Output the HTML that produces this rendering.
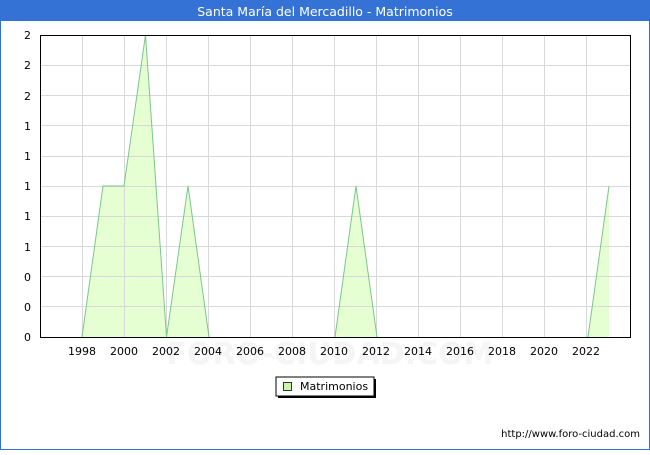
<!DOCTYPE html><html><head><style>body{margin:0}</style></head><body>
<svg width="650" height="450" xmlns="http://www.w3.org/2000/svg" font-family="DejaVu Sans, Liberation Sans, sans-serif">
<rect x="0" y="0" width="650" height="450" fill="#3572d6"/>
<rect x="1" y="21" width="648" height="428" fill="#fff"/>
<text x="325" y="16" fill="#fff" font-size="12.5" text-anchor="middle">Santa María del Mercadillo - Matrimonios</text>
<text x="330" y="364" font-size="30" fill="#f5f5f5" text-anchor="middle" font-weight="bold">FORO-CIUDAD.COM</text>
<path d="M82 337L103 186L124 186L145.5 35L166.5 337L188 186L209 337ZM335 337L356 186L377 337ZM588 337L609 186L609 337Z" fill="#e6ffd2" stroke="none"/>
<g stroke="#d8d8d8" stroke-width="1">
<path d="M82.5 35V337M124.5 35V337M166.5 35V337M208.5 35V337M250.5 35V337M292.5 35V337M334.5 35V337M376.5 35V337M418.5 35V337M460.5 35V337M502.5 35V337M544.5 35V337M586.5 35V337"/>
<path d="M40 65.5H630M40 95.5H630M40 125.5H630M40 156.5H630M40 186.5H630M40 216.5H630M40 246.5H630M40 276.5H630M40 306.5H630"/>
</g>
<path d="M82 337L103 186L124 186L145.5 35L166.5 337L188 186L209 337M335 337L356 186L377 337M588 337L609 186" fill="none" stroke="#7cc68e" stroke-width="1"/>
<rect x="40.5" y="35.5" width="590" height="302" fill="none" stroke="#000"/>
<g font-size="11" fill="#000" text-anchor="end">
<text x="31" y="39">2</text><text x="31" y="69">2</text><text x="31" y="100">2</text><text x="31" y="130">1</text><text x="31" y="160">1</text><text x="31" y="190">1</text><text x="31" y="220">1</text><text x="31" y="251">1</text><text x="31" y="281">0</text><text x="31" y="311">0</text><text x="31" y="341">0</text>
</g>
<g font-size="11" fill="#000" text-anchor="middle">
<text x="82" y="355">1998</text><text x="124" y="355">2000</text><text x="166" y="355">2002</text><text x="208" y="355">2004</text><text x="250" y="355">2006</text><text x="292" y="355">2008</text><text x="334" y="355">2010</text><text x="376" y="355">2012</text><text x="418" y="355">2014</text><text x="460" y="355">2016</text><text x="502" y="355">2018</text><text x="544" y="355">2020</text><text x="586" y="355">2022</text>
</g>
<rect x="278" y="379" width="98" height="19" fill="#000"/>
<rect x="276" y="377" width="98" height="19" fill="#fff" stroke="#000" stroke-width="1"/>
<rect x="283.5" y="382.5" width="8" height="8" fill="#ccf5a8" stroke="#333"/>
<text x="300" y="390" font-size="11">Matrimonios</text>
<text x="640" y="437" font-size="10" text-anchor="end">http://www.foro-ciudad.com</text>
</svg>
</body></html>
